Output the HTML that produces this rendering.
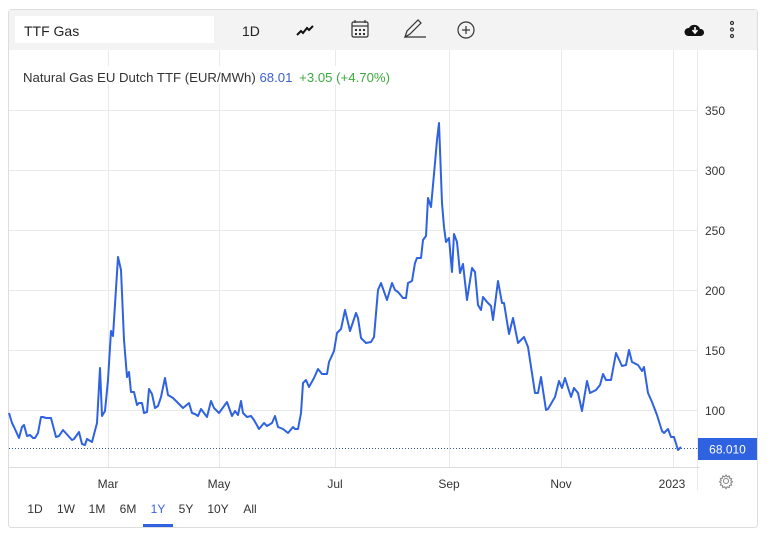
<!DOCTYPE html>
<html><head><meta charset="utf-8"><style>
body{margin:0;width:767px;height:537px;background:#fff;overflow:hidden;font-family:"Liberation Sans",Arial,sans-serif;}
</style></head><body>
<svg width="767" height="537" viewBox="0 0 767 537" xmlns="http://www.w3.org/2000/svg" font-family="Liberation Sans, Arial, sans-serif">
<rect x="8.5" y="9.5" width="749" height="518" rx="3" fill="#fff" stroke="#ddd"/>
<rect x="9" y="10" width="748" height="40" fill="#f3f3f3"/>
<rect x="15" y="16" width="199" height="27" fill="#fff"/>
<text x="24" y="36" font-size="14" fill="#222">TTF Gas</text>
<text x="242" y="36" font-size="14" fill="#222">1D</text>
<path d="M297 35 L301 31 L303 33 L307 28 L309 30 L313 26" fill="none" stroke="#111" stroke-width="2"/>
<g fill="none" stroke="#333" stroke-width="1.2"><rect x="352" y="22" width="16" height="15" rx="1.5"/><line x1="352" y1="26" x2="368" y2="26"/><line x1="355" y1="20" x2="355" y2="23"/><line x1="365" y1="20" x2="365" y2="23"/></g>
<g fill="#333"><rect x="355" y="29" width="2" height="2"/><rect x="359" y="29" width="2" height="2"/><rect x="363" y="29" width="2" height="2"/><rect x="355" y="33" width="2" height="2"/><rect x="359" y="33" width="2" height="2"/><rect x="363" y="33" width="2" height="2"/></g>
<g fill="none" stroke="#333" stroke-width="1.2"><path d="M405 37 L407 31 L418 20 L421 23 L410 34 Z"/><line x1="405" y1="37" x2="426" y2="37"/></g>
<g fill="none" stroke="#333" stroke-width="1.2"><circle cx="466" cy="30" r="8"/><line x1="462" y1="30" x2="470" y2="30"/><line x1="466" y1="26" x2="466" y2="34"/></g>
<path d="M688 36 a4 4 0 0 1 1-8 a6 6 0 0 1 11 1 a3.5 3.5 0 0 1 1 7 Z" fill="#111"/>
<path d="M695 27 v5 M692.5 30 l2.5 3 l2.5-3" stroke="#fff" stroke-width="1.6" fill="none"/>
<g fill="none" stroke="#333" stroke-width="1.2"><circle cx="732" cy="23" r="1.5"/><circle cx="732" cy="29.5" r="1.5"/><circle cx="732" cy="36" r="1.5"/></g>
<g stroke="#e9e9e9" stroke-width="1">
<line x1="9" y1="110.5" x2="697" y2="110.5"/><line x1="9" y1="170.5" x2="697" y2="170.5"/><line x1="9" y1="230.5" x2="697" y2="230.5"/><line x1="9" y1="290.5" x2="697" y2="290.5"/><line x1="9" y1="350.5" x2="697" y2="350.5"/><line x1="9" y1="410.5" x2="697" y2="410.5"/>
<line x1="108.5" y1="50" x2="108.5" y2="467"/><line x1="219.5" y1="50" x2="219.5" y2="467"/><line x1="335.5" y1="50" x2="335.5" y2="467"/><line x1="449.5" y1="50" x2="449.5" y2="467"/><line x1="561.5" y1="50" x2="561.5" y2="467"/><line x1="673.5" y1="50" x2="673.5" y2="467"/><line x1="697.5" y1="50" x2="697.5" y2="490"/>
</g>
<rect x="20" y="66" width="372" height="18" fill="#fff"/>
<text x="23" y="82" font-size="13.2" fill="#333">Natural Gas EU Dutch TTF (EUR/MWh) <tspan fill="#3d5fd0">68.01</tspan> <tspan fill="#3caa3c" dx="3">+3.05 (+4.70%)</tspan></text>
<line x1="9" y1="467.5" x2="700" y2="467.5" stroke="#ddd"/>
<g font-size="12" fill="#333"><text x="705" y="115">350</text><text x="705" y="175">300</text><text x="705" y="235">250</text><text x="705" y="295">200</text><text x="705" y="355">150</text><text x="705" y="415">100</text></g>
<line x1="9" y1="448.5" x2="698" y2="448.5" stroke="#3a5a8a" stroke-dasharray="1,2"/>
<polyline fill="none" stroke="#2f62e0" stroke-width="2" stroke-linejoin="round" points="9,413 12,423 14,427 19,438 22,427 24,425 27,436 30,435 33,438 35,438 38,433 41,417 43,417 46,418 51,418 56,437 59,436 63,430 72,440 74,439 79,432 82,444 85,445 87,439 92,442 97,423 100,368 102,416 105,411 108,380 111,331 113,336 118,257 121,270 124,340 127,377 129,372 131,392 134,392 137,405 139,403 142,403 144,413 147,412 149,389 152,394 155,408 158,406 161,397 165,378 168,395 173,398 178,403 183,408 189,403 192,413 195,414 198,416 201,409 207,417 211,401 214,408 219,413 227,402 232,416 235,411 238,415 241,401 243,413 247,417 251,416 254,420 259,429 264,423 267,426 272,423 275,416 278,427 283,429 288,433 293,427 295,429 298,429 301,413 303,383 306,380 309,387 314,378 318,369 322,374 327,374 329,362 334,351 337,333 341,329 345,310 350,331 356,313 358,318 361,338 366,343 371,342 374,337 378,290 381,283 387,300 392,283 395,290 398,292 403,298 406,298 408,283 412,281 415,263 417,258 421,258 423,240 426,236 428,198 431,207 435,163 437,140 439,123 442,203 444,227 446,242 449,238 452,272 454,234 457,242 460,273 463,264 467,300 472,268 475,272 478,305 481,310 483,297 487,302 491,306 493,320 498,281 502,303 504,303 509,334 513,318 518,343 524,337 528,347 535,393 538,393 541,377 546,410 548,409 555,397 559,381 562,388 565,378 571,397 574,388 578,393 582,411 587,381 590,393 596,390 600,385 603,374 606,380 611,380 616,353 622,366 626,365 629,350 632,362 638,365 642,371 644,367 648,393 652,402 657,415 662,431 664,433 668,429 671,437 674,437 678,450 681,447"/>
<rect x="698" y="438" width="59" height="22" fill="#2f62e0"/>
<text x="727.5" y="453.5" font-size="12" fill="#fff" text-anchor="middle">68.010</text>
<g font-size="12" fill="#333" text-anchor="middle"><text x="108" y="488">Mar</text><text x="219" y="488">May</text><text x="335" y="488">Jul</text><text x="449" y="488">Sep</text><text x="561" y="488">Nov</text><text x="672" y="488">2023</text></g>
<g fill="none" stroke="#888" stroke-width="1.1"><circle cx="726" cy="481" r="2.5"/><path d="M726 475 l1.2 1.8 2-0.8 0.3 2.1 2.1 0.4-0.8 2 1.7 1.3-1.7 1.3 0.8 2-2.1 0.4-0.3 2.1-2-0.8-1.2 1.8-1.2-1.8-2 0.8-0.3-2.1-2.1-0.4 0.8-2-1.7-1.3 1.7-1.3-0.8-2 2.1-0.4 0.3-2.1 2 0.8z"/></g>
<g font-size="12" fill="#333" text-anchor="middle"><text x="35" y="513">1D</text><text x="66" y="513">1W</text><text x="97" y="513">1M</text><text x="128" y="513">6M</text><text x="158" y="513" fill="#3d64d8">1Y</text><text x="186" y="513">5Y</text><text x="218" y="513">10Y</text><text x="250" y="513">All</text></g>
<rect x="143" y="524" width="30" height="3" fill="#2f62e0"/>
</svg>
</body></html>
